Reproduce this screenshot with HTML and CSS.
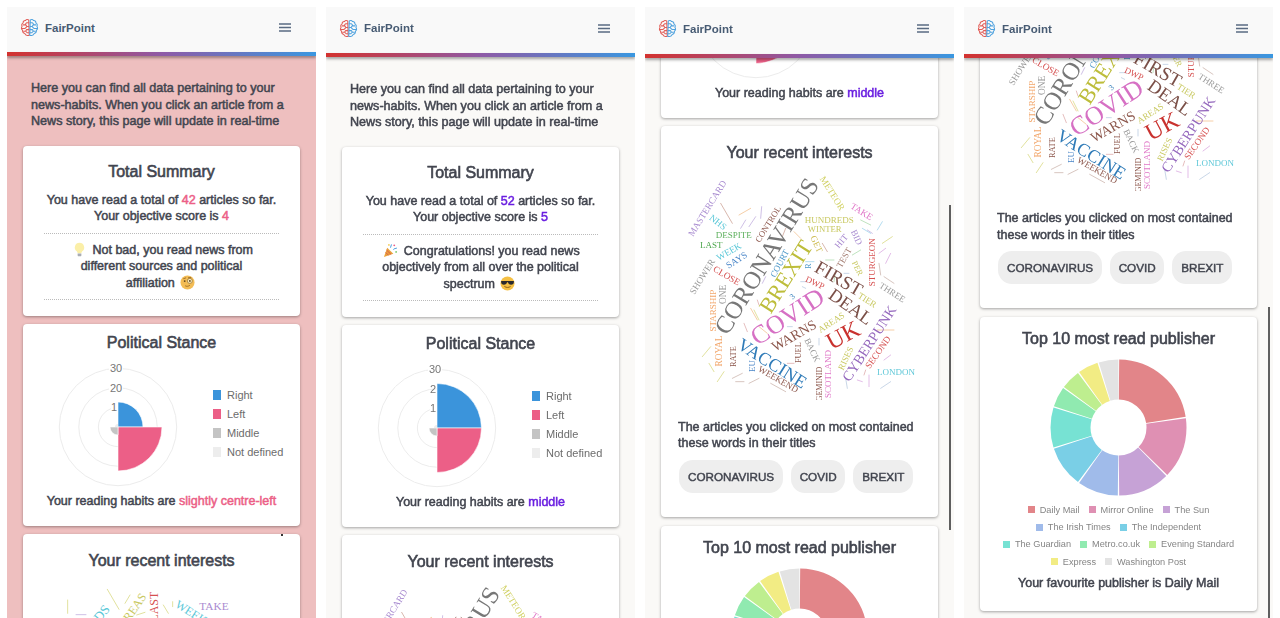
FILE: index.html
```html
<!DOCTYPE html>
<html lang="en">
<head>
<meta charset="utf-8">
<title>FairPoint</title>
<link rel="stylesheet" href="styles.css">
</head>
<body>
<svg class="defs" width="0" height="0" aria-hidden="true">
  <symbol id="brain" viewBox="0 0 36 36">
    <g fill="none" stroke-width="2" stroke-linecap="round" stroke-linejoin="round">
      <g stroke="#E25D58">
        <path d="M16.5 3.5c-2.5-1.500-5-.8-6 1.200-3-.4-5 1.800-4.500 4.500-2.600 1.300-3.400 4.300-2 6.500-1.700 2.500-1.200 5.800 1 7.500-.5 3 1.300 5.600 4 6 1 2.800 3.500 4.300 6 3.800 1 .4 1.800 .2 2.500-.3z"/>
        <path d="M16.500 9h-4l-2.500 3M6 13h5l2 3h3.500M4 20h5l3-2.500M16.500 22h-4l-2 3H7M16.500 28h-3l-2-2.500"/>
      </g>
      <g stroke="#4FA2DE">
        <path d="M19.500 3.500c2.500-1.500 5-.8 6 1.200 3-.4 5 1.800 4.500 4.500 2.600 1.300 3.400 4.300 2 6.500 1.700 2.500 1.200 5.800-1 7.500.5 3-1.300 5.600-4 6-1 2.800-3.500 4.300-6 3.800-1 .4-1.800 .2-2.500-.3z"/>
        <path d="M19.500 9h4l2.500 3M30 13h-5l-2 3h-3.500M32 20h-5l-3-2.500M19.500 22h4l2 3H29M19.500 28h3l2-2.500"/>
      </g>
    </g>
  </symbol>

  <symbol id="burger" viewBox="0 0 12 9">
    <path d="M0 1h12M0 4.500h12M0 8h12" fill="none" stroke="#5A6B82" stroke-width="1.500"/>
  </symbol>

  <symbol id="bulb" viewBox="0 0 16 16">
    <path d="M8 .8a5 5 0 0 0-3 9c.7.6.9 1.300 1 2.200h4c.1-.9.300-1.600 1-2.200a5 5 0 0 0-3-9z" fill="#FBEFA8"/>
    <path d="M6 12.300h4v2a1.200 1.200 0 0 1-1.200 1H7.200a1.200 1.200 0 0 1-1.200-1z" fill="#A9ADB3"/>
  </symbol>
  <symbol id="monocle" viewBox="0 0 16 16">
    <circle cx="8" cy="8" r="7.500" fill="#F3BC55"/>
    <circle cx="10.500" cy="6.300" r="2.700" fill="#FBE9B8" stroke="#8A6A2A" stroke-width=".7"/>
    <circle cx="10.500" cy="6.300" r="1" fill="#5B4420"/>
    <circle cx="5" cy="6.500" r="1" fill="#5B4420"/>
    <path d="M3.500 4l3-1M8.500 3l3.500-.5M5.500 11.500c1.500 .8 3 .8 5-.5" fill="none" stroke="#8A5A1A" stroke-width=".8"/>
  </symbol>
  <symbol id="party" viewBox="0 0 16 16">
    <path d="M1 15l3.500-10 6.500 6.500z" fill="#E9A23B"/>
    <path d="M2.800 10l3.200 3.200M3.800 7.500l4.800 4.700" stroke="#D9534F" stroke-width="1"/>
    <path d="M8 5c0-1.500 1-2 1-3.500M11 7c1-1.300 2.500-1 3.800-1.600" fill="none" stroke="#3B94DB" stroke-width="1"/>
    <circle cx="12" cy="2.500" r="1" fill="#EC5F87"/>
    <circle cx="14" cy="9.500" r="1" fill="#7BC96F"/>
    <circle cx="6.300" cy="2" r=".9" fill="#F2C94C"/>
  </symbol>
  <symbol id="cool" viewBox="0 0 16 16">
    <circle cx="8" cy="8" r="7.500" fill="#F5C044"/>
    <path d="M1.200 5.300h13.600v1c0 1.800-1.200 3-3 3s-3-1.100-3.300-2.600h-1C7.200 8.200 6 9.300 4.200 9.300s-3-1.200-3-3z" fill="#2A2A2E"/>
    <path d="M5 11.300c1.800 1.300 4.300 1.300 6 0" fill="none" stroke="#7A4F10" stroke-width=".9" stroke-linecap="round"/>
  </symbol>

  <symbol id="polar-one" viewBox="0 0 130 130">
    <g class="polar-rings">
      <circle cx="65" cy="65" r="58.700"/><circle cx="65" cy="65" r="39.200"/><circle cx="65" cy="65" r="19.600"/>
    </g>
    <path d="M65 65V40a25 25 0 0 1 25 25z" fill="#3B94DB" stroke="#fff" stroke-width=".6"/>
    <path d="M65 65h44a44 44 0 0 1-44 44z" fill="#EC5F87" stroke="#fff" stroke-width=".6"/>
    <path d="M65 65h-8a8 8 0 0 0 8 8z" fill="#C4C4C4" stroke="#fff" stroke-width=".6"/>
    <path d="M65 65v-3a3 3 0 0 0-3 3z" fill="#EDEDED"/>
    <g class="polar-labels">
      <rect x="56" y="0" width="14" height="11"/><text x="63" y="10">30</text>
      <rect x="56" y="20" width="14" height="11"/><text x="63" y="29.500">20</text>
      <rect x="58" y="39" width="7" height="11"/><text x="61" y="49">1</text>
    </g>
  </symbol>
  <symbol id="polar-two" viewBox="0 0 130 130">
    <g class="polar-rings">
      <circle cx="65" cy="65" r="58.700"/><circle cx="65" cy="65" r="39.200"/><circle cx="65" cy="65" r="19.600"/>
    </g>
    <path d="M65 65V20.500a44.500 44.500 0 0 1 44.500 44.500z" fill="#3B94DB" stroke="#fff" stroke-width=".6"/>
    <path d="M65 65h44.500a44.500 44.500 0 0 1-44.500 44.500z" fill="#EC5F87" stroke="#fff" stroke-width=".6"/>
    <path d="M65 65h-8a8 8 0 0 0 8 8z" fill="#C4C4C4" stroke="#fff" stroke-width=".6"/>
    <path d="M65 65v-3a3 3 0 0 0-3 3z" fill="#EDEDED"/>
    <g class="polar-labels">
      <rect x="56" y="0" width="14" height="11"/><text x="63" y="10">30</text>
      <text x="61" y="29.500">2</text>
      <rect x="58" y="39" width="7" height="11"/><text x="61" y="49">1</text>
    </g>
  </symbol>

  <symbol id="cloud" viewBox="0 9 780 711">
    <g class="cloud-bits" stroke-width="3" stroke-linecap="round">
      <path d="M155 130l35 60M350 205l-10 25M460 250l15 25" stroke="#D9B8AE"/>
      <path d="M210 165l35-20M375 215l20 20M625 510h50M270 500l25 20M245 445l20 35" stroke="#F6CFA8"/>
      <path d="M215 205l15-25M240 200l20-30M275 175l3-35M595 210l15 10M280 370l10-20" stroke="#CFC0E6"/>
      <path d="M575 180l30 15M550 285l25-15M495 365l3-20M470 300h25" stroke="#BFE3BF"/>
      <path d="M580 205l25 15M625 210l15-25M410 305h25" stroke="#B5DDF0"/>
      <path d="M640 250l30-20M100 590l25-30M120 610l15 25M145 665l20-30M255 450l15 30" stroke="#E2E29E"/>
      <path d="M630 280l20-15M650 310l15-30M645 600l20-15M600 680V645M565 660l15 5" stroke="#E3BDE8"/>
      <path d="M630 310l5 35M645 350l30 20M190 655l30-15M240 670l30-15M305 670l45 25M200 665h25" stroke="#D8C6C0"/>
      <path d="M635 685l30-20M395 365h20M400 380l10 5M525 340h15M355 500h15M530 655l5 30M450 535v20" stroke="#C9D7E8"/>
      <path d="M225 490l10 25M265 420l5 15M355 610h20M585 645l5-15" stroke="#E6BFBF"/>
    </g>
    <g class="cloud-words">
      <text x="292" y="288" fill="#777777" font-size="75" transform="rotate(-58.600 292 288)">CORONAVIRUS</text>
      <text x="350" y="350" fill="#BDBD3A" font-size="67" transform="rotate(-58 350 350)">BREXIT</text>
      <text x="355" y="470" fill="#D670C4" font-size="78" transform="rotate(-33 355 470)">COVID</text>
      <text x="510" y="355" fill="#7B5048" font-size="57" transform="rotate(30 510 355)">FIRST</text>
      <text x="545" y="440" fill="#7B5048" font-size="55" transform="rotate(35 545 440)">DEAL</text>
      <text x="522" y="525" fill="#C9322F" font-size="72" transform="rotate(-28 522 525)">UK</text>
      <text x="310" y="610" fill="#2F7BB8" font-size="54" transform="rotate(32 310 610)">VACCINE</text>
      <text x="600" y="550" fill="#9467BD" font-size="43" transform="rotate(-57 600 550)">CYBERPUNK</text>
      <text x="375" y="527" fill="#8C564B" font-size="42" transform="rotate(-30 375 527)">WARNS</text>
      <text x="115" y="145" fill="#A88BD0" font-size="28" transform="rotate(-58 115 145)">MASTERCARD</text>
      <text x="490" y="100" fill="#D0D060" font-size="28" transform="rotate(58 490 100)">METEOR</text>
      <text x="578" y="155" fill="#E078C8" font-size="28" transform="rotate(32 578 155)">TAKE</text>
      <text x="147" y="187" fill="#5CC8D8" font-size="28" transform="rotate(38 147 187)">NHS</text>
      <text x="194" y="225" fill="#5DB05D" font-size="27">DESPITE</text>
      <text x="127" y="254" fill="#4CA64C" font-size="27">LAST</text>
      <text x="180" y="275" fill="#5CC8D8" font-size="28" transform="rotate(-30 180 275)">WEEK</text>
      <text x="203" y="300" fill="#4A86C8" font-size="28" transform="rotate(-32 203 300)">SAYS</text>
      <text x="297" y="192" fill="#8C564B" font-size="26" transform="rotate(-58 297 192)">CONTROL</text>
      <text x="481" y="180" fill="#C8C860" font-size="27">HUNDREDS</text>
      <text x="467" y="207" fill="#C8C860" font-size="26">WINTER</text>
      <text x="563" y="232" fill="#A98BD0" font-size="27" transform="rotate(65 563 232)">BID</text>
      <text x="517" y="243" fill="#A98BD0" font-size="27" transform="rotate(-50 517 243)">HIT</text>
      <text x="443" y="252" fill="#CDBB50" font-size="27" transform="rotate(65 443 252)">GET</text>
      <text x="525" y="293" fill="#A0786C" font-size="27" transform="rotate(-60 525 293)">TEST</text>
      <text x="608" y="307" fill="#D65050" font-size="27" transform="rotate(-90 608 307)">STURGEON</text>
      <text x="565" y="325" fill="#C8C860" font-size="25" transform="rotate(65 565 325)">PER</text>
      <text x="418" y="318" fill="#4A96C8" font-size="24" transform="rotate(-90 418 318)">R</text>
      <text x="332" y="310" fill="#4A96C8" font-size="27" transform="rotate(-62 332 310)">COURT</text>
      <text x="438" y="368" fill="#D65050" font-size="27" transform="rotate(25 438 368)">DWP</text>
      <text x="100" y="350" fill="#999999" font-size="28" transform="rotate(-58 100 350)">SHOWER</text>
      <text x="173" y="347" fill="#D65050" font-size="28" transform="rotate(30 173 347)">CLOSE</text>
      <text x="162" y="403" fill="#999999" font-size="28" transform="rotate(-90 162 403)">ONE</text>
      <text x="132" y="452" fill="#F2A66A" font-size="27" transform="rotate(-90 132 452)">STARSHIP</text>
      <text x="670" y="397" fill="#999999" font-size="27" transform="rotate(33 670 397)">THREE</text>
      <text x="595" y="420" fill="#C8C860" font-size="27" transform="rotate(32 595 420)">TIER</text>
      <text x="487" y="487" fill="#C8C860" font-size="27" transform="rotate(-33 487 487)">AREAS</text>
      <text x="150" y="573" fill="#F2A66A" font-size="28" transform="rotate(-90 150 573)">ROYAL</text>
      <text x="193" y="590" fill="#8C564B" font-size="25" transform="rotate(-90 193 590)">RATE</text>
      <text x="248" y="618" fill="#4A86C8" font-size="27" transform="rotate(-90 248 618)">EU</text>
      <text x="390" y="578" fill="#8C564B" font-size="25" transform="rotate(-90 390 578)">FUEL</text>
      <text x="430" y="570" fill="#999999" font-size="27" transform="rotate(65 430 570)">BACK</text>
      <text x="328" y="658" fill="#8C564B" font-size="27" transform="rotate(30 328 658)">WEEKEND</text>
      <text x="450" y="672" fill="#8C564B" font-size="24" transform="rotate(-90 450 672)">GEMINID</text>
      <text x="478" y="642" fill="#E078C8" font-size="27" transform="rotate(-90 478 642)">SCOTLAND</text>
      <text x="530" y="595" fill="#C8C860" font-size="27" transform="rotate(-65 530 595)">RISES</text>
      <text x="627" y="577" fill="#D65050" font-size="28" transform="rotate(-55 627 577)">SECOND</text>
      <text x="681" y="635" fill="#60C8D8" font-size="27">LONDON</text>
      <text x="370" y="410" fill="#2F7BB8" font-size="24" transform="rotate(-45 370 410)">3</text>
    </g>
  </symbol>

  <symbol id="donut" viewBox="0 0 137 137">
    <g class="donut-ring" transform="rotate(-90 68.500 68.500)">
      <circle cx="68.500" cy="68.500" r="48" pathLength="360" stroke="#E28589" stroke-dasharray="80.300 279.700" stroke-dashoffset="-.6"/>
      <circle cx="68.500" cy="68.500" r="48" pathLength="360" stroke="#DF90B3" stroke-dasharray="52.100 307.900" stroke-dashoffset="-82.100"/>
      <circle cx="68.500" cy="68.500" r="48" pathLength="360" stroke="#C6A2D6" stroke-dasharray="44 316" stroke-dashoffset="-135.400"/>
      <circle cx="68.500" cy="68.500" r="48" pathLength="360" stroke="#A0BBEA" stroke-dasharray="34.800 325.200" stroke-dashoffset="-180.600"/>
      <circle cx="68.500" cy="68.500" r="48" pathLength="360" stroke="#7ACFE6" stroke-dasharray="35.100 324.900" stroke-dashoffset="-216.600"/>
      <circle cx="68.500" cy="68.500" r="48" pathLength="360" stroke="#77E2D3" stroke-dasharray="34.200 325.800" stroke-dashoffset="-252.900"/>
      <circle cx="68.500" cy="68.500" r="48" pathLength="360" stroke="#90EAB0" stroke-dasharray="17.100 342.900" stroke-dashoffset="-288.300"/>
      <circle cx="68.500" cy="68.500" r="48" pathLength="360" stroke="#BEEE8F" stroke-dasharray="16.800 343.200" stroke-dashoffset="-306.600"/>
      <circle cx="68.500" cy="68.500" r="48" pathLength="360" stroke="#F2EC84" stroke-dasharray="17.300 342.700" stroke-dashoffset="-324.600"/>
      <circle cx="68.500" cy="68.500" r="48" pathLength="360" stroke="#E3E3E3" stroke-dasharray="16.800 343.200" stroke-dashoffset="-343.100"/>
    </g>
  </symbol>
</svg>

<main class="screens">

  <section class="phone phone-pink">
    <header class="bar bar-short">
      <div class="brand"><svg class="logo"><use href="#brain"/></svg><span class="brand-name">FairPoint</span></div>
      <svg class="burger"><use href="#burger"/></svg>
    </header>
    <div class="stripe"></div>
    <div class="content">
      <p class="intro">Here you can find all data pertaining to your news-habits. When you click an article from a News story, this page will update in real-time</p>
      <article class="card card-summary">
        <h2>Total Summary</h2>
        <p class="line">You have read a total of <b class="pink">42</b> articles so far.<br>Your objective score is <b class="pink">4</b></p>
        <p class="verdict"><svg class="emoji"><use href="#bulb"/></svg> Not bad, you read news from different sources and political affiliation <svg class="emoji"><use href="#monocle"/></svg></p>
      </article>
      <article class="card card-stance">
        <h2>Political Stance</h2>
        <div class="stance">
          <svg class="polar"><use href="#polar-one"/></svg>
          <ul class="legend">
            <li><i class="sw sw-right"></i>Right</li><li><i class="sw sw-left"></i>Left</li><li><i class="sw sw-middle"></i>Middle</li><li><i class="sw sw-none"></i>Not defined</li>
          </ul>
        </div>
        <p class="line">Your reading habits are <b class="pink">slightly centre-left</b></p>
      </article>
      <article class="card card-interests">
        <h2>Your recent interests</h2>
        <svg class="cloud" viewBox="93 753 780 711">
          <g class="cloud-bits" stroke-width="3" stroke-linecap="round">
            <path d="M322 808l35 60M375 850l15-25M203 840v40M490 855l15 25M518 845v15M410 885l25-8" stroke="#E2E29E"/>
            <path d="M228 884h30" stroke="#CFC0E6"/>
          </g>
          <g class="cloud-words">
            <text x="642" y="858" fill="#A98BD0" font-size="34">TAKE</text>
            <text x="462" y="860" fill="#D65050" font-size="36" transform="rotate(-90 462 860)">LAST</text>
            <text x="574" y="877" fill="#5CC8D8" font-size="36" transform="rotate(32 574 877)">WEEK</text>
            <text x="275" y="915" fill="#5CC8D8" font-size="40" transform="rotate(-50 275 915)">WORDS</text>
            <text x="397" y="872" fill="#C8C860" font-size="36" transform="rotate(-55 397 872)">AREAS</text>
          </g>
        </svg>
      </article>
    </div>
    <i class="speck"></i>
  </section>

  <section class="phone">
    <header class="bar bar-mid">
      <div class="brand"><svg class="logo"><use href="#brain"/></svg><span class="brand-name">FairPoint</span></div>
      <svg class="burger"><use href="#burger"/></svg>
    </header>
    <div class="stripe"></div>
    <div class="content">
      <p class="intro">Here you can find all data pertaining to your news-habits. When you click an article from a News story, this page will update in real-time</p>
      <article class="card card-summary">
        <h2>Total Summary</h2>
        <p class="line">You have read a total of <b class="violet">52</b> articles so far.<br>Your objective score is <b class="violet">5</b></p>
        <p class="verdict"><svg class="emoji"><use href="#party"/></svg> Congratulations! you read news objectively from all over the political spectrum <svg class="emoji"><use href="#cool"/></svg></p>
      </article>
      <article class="card card-stance">
        <h2>Political Stance</h2>
        <div class="stance">
          <svg class="polar"><use href="#polar-two"/></svg>
          <ul class="legend">
            <li><i class="sw sw-right"></i>Right</li><li><i class="sw sw-left"></i>Left</li><li><i class="sw sw-middle"></i>Middle</li><li><i class="sw sw-none"></i>Not defined</li>
          </ul>
        </div>
        <p class="line">Your reading habits are <b class="violet">middle</b></p>
      </article>
      <article class="card card-interests">
        <h2>Your recent interests</h2>
        <svg class="cloud"><use href="#cloud"/></svg>
      </article>
    </div>
  </section>

  <section class="phone">
    <header class="bar bar-tall">
      <div class="brand"><svg class="logo"><use href="#brain"/></svg><span class="brand-name">FairPoint</span></div>
      <svg class="burger"><use href="#burger"/></svg>
    </header>
    <div class="stripe"></div>
    <div class="content content-third">
      <article class="card card-stance">
        <h2>Political Stance</h2>
        <div class="stance">
          <svg class="polar"><use href="#polar-two"/></svg>
          <ul class="legend">
            <li><i class="sw sw-right"></i>Right</li><li><i class="sw sw-left"></i>Left</li><li><i class="sw sw-middle"></i>Middle</li><li><i class="sw sw-none"></i>Not defined</li>
          </ul>
        </div>
        <p class="line">Your reading habits are <b class="violet">middle</b></p>
      </article>
      <article class="card card-interests">
        <h2>Your recent interests</h2>
        <svg class="cloud"><use href="#cloud"/></svg>
        <p class="line line-left">The articles you clicked on most contained these words in their titles</p>
        <div class="chips"><span class="chip">CORONAVIRUS</span><span class="chip">COVID</span><span class="chip">BREXIT</span></div>
      </article>
      <article class="card card-publisher">
        <h2>Top 10 most read publisher</h2>
        <svg class="donut"><use href="#donut"/></svg>
      </article>
    </div>
    <i class="thumb thumb-third"></i>
  </section>

  <section class="phone">
    <header class="bar bar-tall">
      <div class="brand"><svg class="logo"><use href="#brain"/></svg><span class="brand-name">FairPoint</span></div>
      <svg class="burger"><use href="#burger"/></svg>
    </header>
    <div class="stripe"></div>
    <div class="content content-fourth">
      <article class="card card-interests">
        <h2>Your recent interests</h2>
        <svg class="cloud"><use href="#cloud"/></svg>
        <p class="line line-left">The articles you clicked on most contained these words in their titles</p>
        <div class="chips"><span class="chip">CORONAVIRUS</span><span class="chip">COVID</span><span class="chip">BREXIT</span></div>
      </article>
      <article class="card card-publisher">
        <h2>Top 10 most read publisher</h2>
        <svg class="donut"><use href="#donut"/></svg>
        <ul class="pub-legend">
          <li><i class="dot dot-1"></i>Daily Mail</li>
          <li><i class="dot dot-2"></i>Mirror Online</li>
          <li><i class="dot dot-3"></i>The Sun</li>
          <li><i class="dot dot-4"></i>The Irish Times</li>
          <li><i class="dot dot-5"></i>The Independent</li>
          <li><i class="dot dot-6"></i>The Guardian</li>
          <li><i class="dot dot-7"></i>Metro.co.uk</li>
          <li><i class="dot dot-8"></i>Evening Standard</li>
          <li><i class="dot dot-9"></i>Express</li>
          <li><i class="dot dot-10"></i>Washington Post</li>
        </ul>
        <p class="line line-fav">Your favourite publisher is Daily Mail</p>
      </article>
    </div>
    <i class="thumb thumb-fourth"></i>
  </section>

</main>
</body>
</html>
```

FILE: styles.css
```css
* { box-sizing: border-box; }
html, body { margin: 0; padding: 0; background: #fff; }
body { height: 618px; overflow: hidden; font-family: "Liberation Sans", Arial, sans-serif; color: #42454f; }
.defs { display: none; }

.screens { display: flex; gap: 10px; padding: 7px 0 0 7px; height: 618px; filter: blur(.3px); }

.phone { position: relative; flex: 0 0 309px; width: 309px; height: 611px; display: flex; flex-direction: column; overflow: hidden; background: #FAF9F7; }
.phone-pink { background: #EEBFBF; }

.bar { position: relative; z-index: 3; flex: none; display: flex; align-items: center; justify-content: space-between; padding: 0 25px 4px 13px; background: #F9F9F9; }
.bar-short { height: 45px; }
.bar-mid { height: 46px; }
.bar-tall { height: 47px; }
.brand { display: flex; align-items: center; gap: 6px; }
.logo { width: 19px; height: 19px; }
.brand-name { font-size: 11.500px; font-weight: 700; color: #475B73; }
.burger { width: 12px; height: 9px; }

.stripe { position: relative; z-index: 3; flex: none; height: 4px; background: linear-gradient(90deg, #D3322F 0%, #8E5AA6 50%, #3A97E0 100%); box-shadow: 0 2px 3px rgba(0,0,0,.35); }

.content { flex: 1; min-height: 0; padding: 0 16px; }
.content-third { margin-top: -142px; }
.content-fourth { margin-top: -141px; }

.intro, .line, .verdict { font-size: 12.500px; font-weight: 400; line-height: 16.500px; -webkit-text-stroke: .5px currentColor; }
.intro { margin: 24px 0 16px; padding: 0 8px; font-size: 12.600px; }

.card { margin-bottom: 8px; background: #fff; border-radius: 4px; box-shadow: 0 1px 3px rgba(0,0,0,.35); }
.card h2 { margin: 0; font-size: 16px; line-height: 22px; font-weight: 400; text-align: center; -webkit-text-stroke: .6px currentColor; }
.line { margin: 0; text-align: center; }
.line b { font-weight: 400; }
.line-left { margin-top: 19px; text-align: left; }
.pink { color: #EC5F87; }
.violet { color: #6A1FE0; }

.card-summary { padding: 15px 21px 16px; }
.card-summary .line { margin-top: 9px; padding-bottom: 8px; }
.verdict { margin: 0; padding: 8px 14px; text-align: center; border-top: 1px dotted #bbb; border-bottom: 1px dotted #bbb; }
.emoji { width: 15px; height: 15px; vertical-align: -3px; margin: 0 2px; }

.card-stance { padding: 8px 17px 16px; }
.stance { display: flex; align-items: flex-start; gap: 30px; margin-top: 8px; margin-bottom: 1px; padding-left: 13px; }
.polar { flex: none; width: 130px; height: 130px; }
.polar-rings circle { fill: none; stroke: #ECECEC; stroke-width: 1; }
.polar-labels rect { fill: #fff; }
.polar-labels text { font-family: "Liberation Sans", Arial, sans-serif; font-size: 11px; fill: #777; text-anchor: middle; }
.legend { list-style: none; margin: 0; padding: 23px 0 0; font-size: 11px; color: #6c6c6c; white-space: nowrap; }
.legend li { display: flex; align-items: center; gap: 6px; height: 19px; }
.sw { display: block; width: 8px; height: 10px; }
.sw-right { background: #3B94DB; }
.sw-left { background: #EC5F87; }
.sw-middle { background: #C4C4C4; }
.sw-none { background: #EDEDED; }

.card-interests { margin-bottom: 9px; padding: 16px 17px 24px; }
.cloud { display: block; width: 260px; height: 237px; margin: -1px 0 0 -9px; }
.cloud-words text { font-family: "Liberation Serif", "Times New Roman", serif; text-anchor: middle; dominant-baseline: central; }
.chips { display: flex; gap: 8px; margin-top: 8px; padding-left: 1px; }
.chip { display: flex; align-items: center; height: 33px; padding: 0 8.500px 0 9px; border-radius: 14px; background: #EEEEEE; font-size: 11.700px; color: #42454f; -webkit-text-stroke: .45px currentColor; }

.card-publisher { padding: 11px 0 20px; }
.donut { display: block; width: 137px; height: 137px; margin: 9px auto 0; }
.donut-ring circle { fill: none; stroke-width: 40; }
.pub-legend { list-style: none; display: flex; flex-wrap: wrap; justify-content: center; column-gap: 9px; width: 232px; margin: 5px auto 0; padding: 0; font-size: 9.200px; color: #858585; }
.pub-legend li { display: flex; align-items: center; gap: 5px; height: 17.400px; white-space: nowrap; }
.dot { display: block; width: 7px; height: 7px; }
.dot-1 { background: #E28589; }
.dot-2 { background: #DF90B3; }
.dot-3 { background: #C6A2D6; }
.dot-4 { background: #A0BBEA; }
.dot-5 { background: #7ACFE6; }
.dot-6 { background: #77E2D3; }
.dot-7 { background: #90EAB0; }
.dot-8 { background: #BEEE8F; }
.dot-9 { background: #F2EC84; }
.dot-10 { background: #E3E3E3; }
.line-fav { margin-top: 4px; }

.thumb { position: absolute; right: 3px; width: 2px; background: #5f5f5f; z-index: 2; }
.thumb-third { top: 198px; height: 325px; }
.thumb-fourth { top: 300px; height: 320px; }
.speck { position: absolute; left: 274px; top: 527px; width: 2px; height: 2px; background: #333; }
```
